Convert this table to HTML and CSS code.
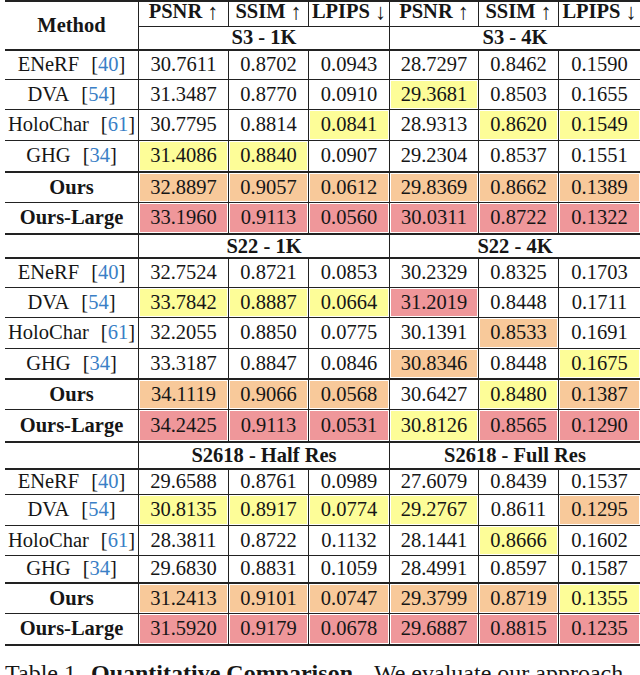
FILE: index.html
```html
<!DOCTYPE html>
<html lang="en">
<head>
<meta charset="utf-8">
<title>Table 1</title>
<link rel="stylesheet" href="styles.css">
</head>
<body>
<div class="page">
  <div class="tbl">
    <div class="head">
      <div class="method">Method</div>
      <div class="metric">PSNR<span class="ar">↑</span></div>
      <div class="metric">SSIM<span class="ar">↑</span></div>
      <div class="metric">LPIPS<span class="ar">↓</span></div>
      <div class="metric">PSNR<span class="ar">↑</span></div>
      <div class="metric">SSIM<span class="ar">↑</span></div>
      <div class="metric end">LPIPS<span class="ar">↓</span></div>
      <div class="group">S3 - 1K</div>
      <div class="group end">S3 - 4K</div>
    </div>

    <div class="row h29">
      <div class="name">ENeRF<span class="cite">[<span class="ref">40</span>]</span></div>
      <div class="v">30.7611</div><div class="v">0.8702</div><div class="v">0.0943</div>
      <div class="v">28.7297</div><div class="v">0.8462</div><div class="v end">0.1590</div>
    </div>
    <div class="row h30">
      <div class="name">DVA<span class="cite">[<span class="ref">54</span>]</span></div>
      <div class="v">31.3487</div><div class="v">0.8770</div><div class="v">0.0910</div>
      <div class="v y">29.3681</div><div class="v">0.8503</div><div class="v end">0.1655</div>
    </div>
    <div class="row h31">
      <div class="name">HoloChar<span class="cite">[<span class="ref">61</span>]</span></div>
      <div class="v">30.7795</div><div class="v">0.8814</div><div class="v y">0.0841</div>
      <div class="v">28.9313</div><div class="v y">0.8620</div><div class="v y end">0.1549</div>
    </div>
    <div class="row h32 thick">
      <div class="name">GHG<span class="cite">[<span class="ref">34</span>]</span></div>
      <div class="v y">31.4086</div><div class="v y">0.8840</div><div class="v">0.0907</div>
      <div class="v">29.2304</div><div class="v">0.8537</div><div class="v end">0.1551</div>
    </div>
    <div class="row h30">
      <div class="name b">Ours</div>
      <div class="v o">32.8897</div><div class="v o">0.9057</div><div class="v o">0.0612</div>
      <div class="v o">29.8369</div><div class="v o">0.8662</div><div class="v o end">0.1389</div>
    </div>
    <div class="row h32 thick">
      <div class="name b">Ours-Large</div>
      <div class="v r">33.1960</div><div class="v r">0.9113</div><div class="v r">0.0560</div>
      <div class="v r">30.0311</div><div class="v r">0.8722</div><div class="v r end">0.1322</div>
    </div>

    <div class="row h24 thick">
      <div class="name"></div>
      <div class="group">S22 - 1K</div>
      <div class="group end">S22 - 4K</div>
    </div>

    <div class="row h29">
      <div class="name">ENeRF<span class="cite">[<span class="ref">40</span>]</span></div>
      <div class="v">32.7524</div><div class="v">0.8721</div><div class="v">0.0853</div>
      <div class="v">30.2329</div><div class="v">0.8325</div><div class="v end">0.1703</div>
    </div>
    <div class="row h30">
      <div class="name">DVA<span class="cite">[<span class="ref">54</span>]</span></div>
      <div class="v y">33.7842</div><div class="v y">0.8887</div><div class="v y">0.0664</div>
      <div class="v r">31.2019</div><div class="v">0.8448</div><div class="v end">0.1711</div>
    </div>
    <div class="row h31">
      <div class="name">HoloChar<span class="cite">[<span class="ref">61</span>]</span></div>
      <div class="v">32.2055</div><div class="v">0.8850</div><div class="v">0.0775</div>
      <div class="v">30.1391</div><div class="v o">0.8533</div><div class="v end">0.1691</div>
    </div>
    <div class="row h31 thick">
      <div class="name">GHG<span class="cite">[<span class="ref">34</span>]</span></div>
      <div class="v">33.3187</div><div class="v">0.8847</div><div class="v">0.0846</div>
      <div class="v o">30.8346</div><div class="v">0.8448</div><div class="v y end">0.1675</div>
    </div>
    <div class="row h30">
      <div class="name b">Ours</div>
      <div class="v o">34.1119</div><div class="v o">0.9066</div><div class="v o">0.0568</div>
      <div class="v">30.6427</div><div class="v y">0.8480</div><div class="v o end">0.1387</div>
    </div>
    <div class="row h33 thick">
      <div class="name b">Ours-Large</div>
      <div class="v r">34.2425</div><div class="v r">0.9113</div><div class="v r">0.0531</div>
      <div class="v y">30.8126</div><div class="v r">0.8565</div><div class="v r end">0.1290</div>
    </div>

    <div class="row h27 thick">
      <div class="name"></div>
      <div class="group">S2618 - Half Res</div>
      <div class="group end">S2618 - Full Res</div>
    </div>

    <div class="row h25">
      <div class="name">ENeRF<span class="cite">[<span class="ref">40</span>]</span></div>
      <div class="v">29.6588</div><div class="v">0.8761</div><div class="v">0.0989</div>
      <div class="v">27.6079</div><div class="v">0.8439</div><div class="v end">0.1537</div>
    </div>
    <div class="row h31">
      <div class="name">DVA<span class="cite">[<span class="ref">54</span>]</span></div>
      <div class="v y">30.8135</div><div class="v y">0.8917</div><div class="v y">0.0774</div>
      <div class="v y">29.2767</div><div class="v">0.8611</div><div class="v o end">0.1295</div>
    </div>
    <div class="row h30">
      <div class="name">HoloChar<span class="cite">[<span class="ref">61</span>]</span></div>
      <div class="v">28.3811</div><div class="v">0.8722</div><div class="v">0.1132</div>
      <div class="v">28.1441</div><div class="v y">0.8666</div><div class="v end">0.1602</div>
    </div>
    <div class="row h28 thick">
      <div class="name">GHG<span class="cite">[<span class="ref">34</span>]</span></div>
      <div class="v">29.6830</div><div class="v">0.8831</div><div class="v">0.1059</div>
      <div class="v">28.4991</div><div class="v">0.8597</div><div class="v end">0.1587</div>
    </div>
    <div class="row h30">
      <div class="name b">Ours</div>
      <div class="v o">31.2413</div><div class="v o">0.9101</div><div class="v o">0.0747</div>
      <div class="v o">29.3799</div><div class="v o">0.8719</div><div class="v y end">0.1355</div>
    </div>
    <div class="row h32 thick">
      <div class="name b">Ours-Large</div>
      <div class="v r">31.5920</div><div class="v r">0.9179</div><div class="v r">0.0678</div>
      <div class="v r">29.6887</div><div class="v r">0.8815</div><div class="v r end">0.1235</div>
    </div>
  </div>

  <p class="caption"><span class="lbl">Table 1.</span><b class="ttl">Quantitative Comparison</b>.<span class="rest">We evaluate our approach</span></p>
</div>
</body>
</html>
```

FILE: styles.css
```css
* {
  box-sizing: border-box;
}

html,
body {
  margin: 0;
  padding: 0;
  background: #ffffff;
}

body {
  font-family: "Liberation Serif", "Times New Roman", serif;
  font-size: 20.5px;
  color: #161616;
}

.page {
  width: 640px;
  height: 675px;
  padding-left: 5px;
  overflow: hidden;
}

.tbl {
  width: 635px;
  border-top: 2px solid #222;
}

.head,
.row {
  display: grid;
  grid-template-columns: 134px 90px 80px 81px 89px 80px 81px;
}

.head {
  grid-template-rows: 25px 24px;
}

.row {
  border-bottom: 1px solid #222;
}

.row.thick {
  border-bottom-width: 2px;
}

.head > div,
.row > div {
  display: flex;
  align-items: center;
  justify-content: center;
  white-space: nowrap;
  border-right: 1px solid #222;
  line-height: 1.15;
}

.head > .end,
.row > .end {
  border-right: none;
}

.method {
  grid-row: 1 / span 2;
  font-weight: bold;
  border-bottom: 2px solid #222;
}

.metric {
  font-weight: bold;
  border-bottom: 1px solid #222;
  padding-bottom: 4px;
}

.ar {
  font-weight: normal;
  font-size: 1.08em;
  margin-left: 5px;
}

.group {
  grid-column: span 3;
  font-weight: bold;
}

.head > .group {
  border-bottom: 2px solid #222;
}

.b {
  font-weight: bold;
}

.cite {
  margin-left: 12px;
}

.ref {
  color: #3a7fc6;
}

.v.y,
.v.o,
.v.r {
  padding: 1px;
  background-clip: content-box;
}

.v.y {
  background-color: #fdfd98;
}

.v.o {
  background-color: #f8c99a;
}

.v.r {
  background-color: #ef979a;
}

.h24 { height: 24px; }
.h25 { height: 25px; }
.h27 { height: 27px; }
.h28 { height: 28px; }
.h29 { height: 29px; }
.h30 { height: 30px; }
.h31 { height: 31px; }
.h32 { height: 32px; }
.h33 { height: 33px; }

.caption {
  margin: 13px 0 0 0;
  width: 635px;
  font-size: 24px;
  line-height: 28px;
  white-space: nowrap;
  overflow: hidden;
}

.lbl {
  margin-right: 9px;
}

.rest {
  margin-left: 15px;
}
```
